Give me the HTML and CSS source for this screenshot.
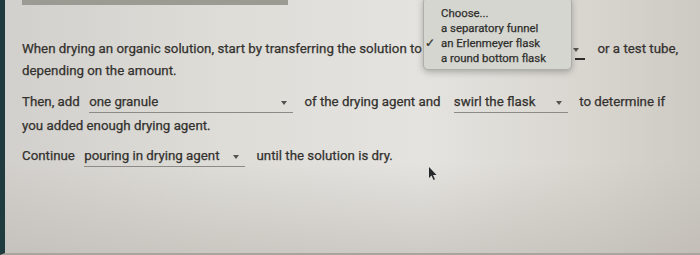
FILE: index.html
```html
<!DOCTYPE html>
<html lang="en">
<head>
    <meta charset="UTF-8">
    <title>Drying an organic solution</title>
    <link rel="stylesheet" href="styles.css">
</head>
<body>

<div class="screen">
    <div class="top-bar"></div>

    <div class="question">
        <p class="line first">
            <span>When drying an organic solution, start by transferring the solution to</span>
            <span class="dd dd-flask">&nbsp;<span class="arrow"></span></span>
            <span>or a test tube,</span>
            <span>depending on the amount.</span>
        </p>

        <p class="line second">
            <span>Then, add</span>
            <span class="dd dd-wide">one granule<span class="arrow"></span></span>
            <span>of the drying agent and</span>
            <span class="dd dd-swirl">swirl the flask<span class="arrow"></span></span>
            <span>to determine if</span>
            <span>you added enough drying agent.</span>
        </p>

        <p class="line third">
            <span>Continue</span>
            <span class="dd dd-pour">pouring in drying agent<span class="arrow"></span></span>
            <span>until the solution is dry.</span>
        </p>
    </div>

    <!-- menu open over the first dropdown -->
    <div class="menu">
        <div class="menu-item">Choose...</div>
        <div class="menu-item">a separatory funnel</div>
        <div class="menu-item"><span class="check">✓</span>an Erlenmeyer flask</div>
        <div class="menu-item">a round bottom flask</div>
    </div>

    <svg class="cursor" width="10" height="16" viewBox="0 0 10 16">
        <path d="M1 1 L1 12 L3.5 9.5 L5.5 14 L7 13.3 L5 9 L8.5 9 Z" fill="#1d1f22"/>
    </svg>
</div>

</body>
</html>
```

FILE: styles.css
```css
body {
    margin: 0;
    font-family: Roboto, "Noto Sans", Arial, sans-serif;
    color: #33312e;
}
.screen {
    position: relative;
    width: 700px;
    height: 255px;
    overflow: hidden;
    box-sizing: border-box;
    border-left: 5px solid #1f3b3d;
    border-bottom: 2px solid #a9a49d;
    background: linear-gradient(90deg, #d2d0cc 0%, #dddcd7 30%, #e4e3df 60%, #d8d5cf 85%, #cdc9c3 100%);
}
.screen::after {
    content: "";
    position: absolute;
    left: 0;
    right: 0;
    bottom: 0;
    height: 90px;
    background: linear-gradient(180deg, rgba(185, 179, 173, 0) 0%, rgba(185, 179, 173, 0.5) 100%);
    pointer-events: none;
}
.top-bar {
    width: 266px;
    height: 5px;
    margin-left: 17px;
    background-color: #9c9b93;
}
.question {
    padding: 33px 12px 0 17px;
    font-size: 13.3px;
    -webkit-text-stroke: 0.25px #33312e;
}
.line {
    margin: 0;
}
.first {
    line-height: 22px;
}
.second {
    margin-top: 8px;
    line-height: 24px;
}
.third {
    margin-top: 6px;
    line-height: 24px;
}
.dd {
    display: inline-block;
    position: relative;
    box-sizing: border-box;
    margin: 0 8px 0 6px;
    padding: 0 14px 2px 0;
    line-height: 16px;
    border-bottom: 1px solid #8c8a86;
    vertical-align: baseline;
}
.arrow {
    position: absolute;
    right: 6px;
    top: 7px;
    border-left: 3.5px solid transparent;
    border-right: 3.5px solid transparent;
    border-top: 4px solid #55534f;
}
.dd-flask {
    width: 157px;
    margin: 0 9px 0 3px;
    border-bottom: none;
}
.dd-flask::after {
    content: "";
    position: absolute;
    right: 0;
    bottom: -1px;
    width: 10px;
    height: 2px;
    background-color: #2e2d2b;
}
.dd-wide {
    width: 204px;
}
.dd-swirl {
    width: 114px;
    margin-left: 10px;
}
.dd-pour {
    width: 161px;
}
.menu {
    position: absolute;
    left: 418px;
    top: -3px;
    width: 149px;
    padding: 8px 0 3px;
    box-sizing: border-box;
    background-color: #d5d6d0;
    border: 1px solid #aeafaa;
    border-radius: 5px;
    box-shadow: 0 2px 6px rgba(60, 60, 55, 0.35);
    font-size: 11.4px;
    line-height: 15px;
    color: #2f2f2c;
    -webkit-text-stroke: 0.25px #2f2f2c;
}
.menu-item {
    position: relative;
    padding-left: 17px;
}
.check {
    position: absolute;
    left: 1px;
    font-family: "DejaVu Sans", sans-serif;
    font-size: 12px;
}
.cursor {
    position: absolute;
    left: 423px;
    top: 166px;
}
```
